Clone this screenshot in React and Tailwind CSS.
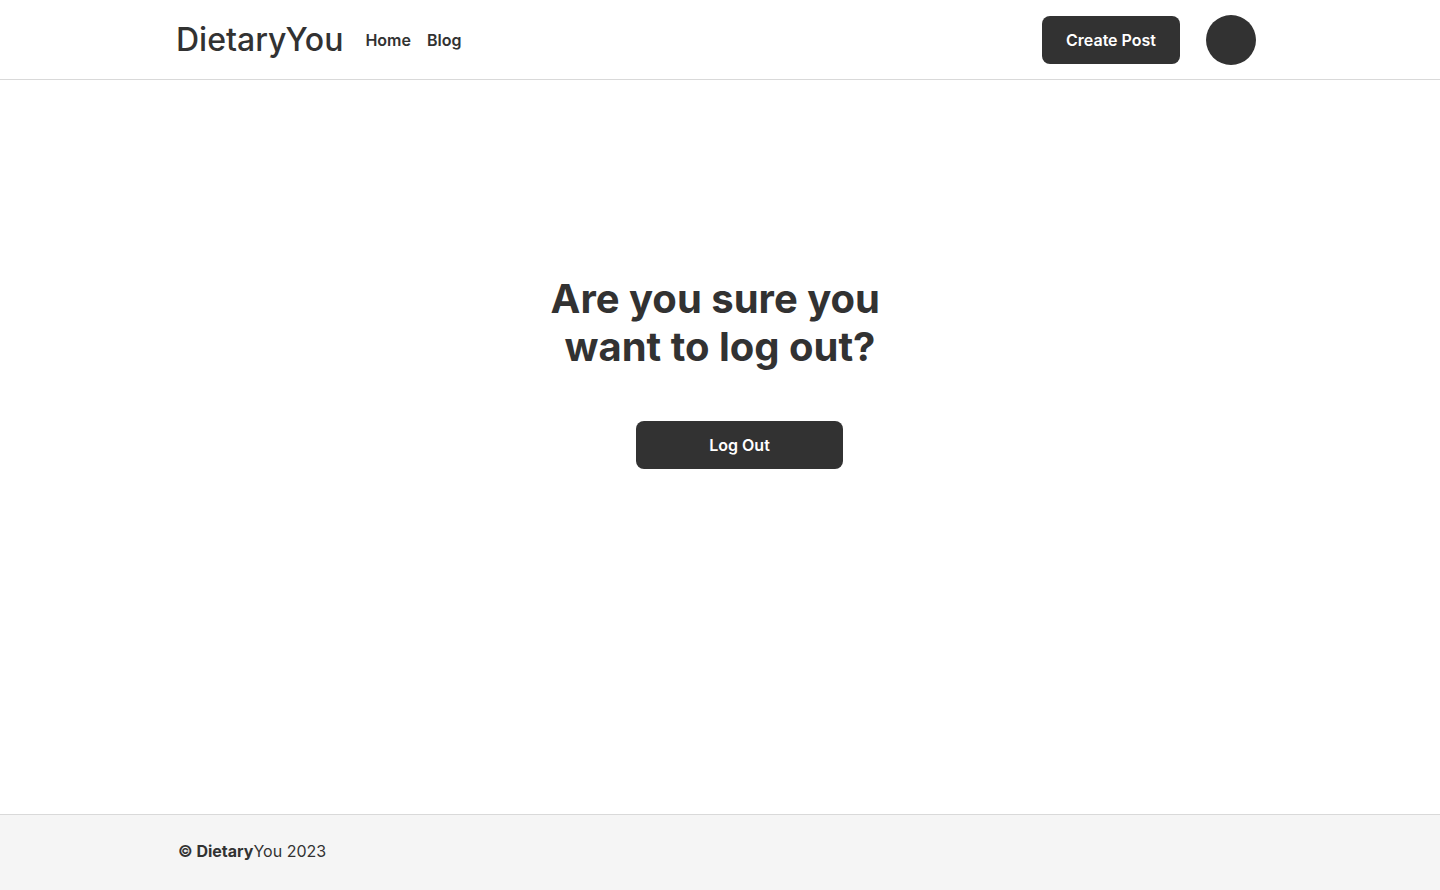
export default function App() {
  return (
    <div className="flex min-h-screen flex-col bg-white font-['Inter',sans-serif] text-[#323232]">
      <header className="border-b border-[#d9d9d9]">
        <div className="mx-auto flex h-[79px] w-full max-w-[1088px] items-center justify-between pr-2">
          <nav aria-label="Main" className="flex items-center">
            <a href="#" className="mr-[22px] text-[32px] leading-10 font-medium">DietaryYou</a>
            <div className="flex gap-4 text-base font-semibold">
              <a href="#home">Home</a>
              <a href="#blog">Blog</a>
            </div>
          </nav>
          <div className="flex items-center gap-[26px]">
            <button type="button" className="h-12 rounded-lg bg-[#323232] px-6 text-base font-semibold text-white">Create Post</button>
            <button type="button" aria-label="Account" className="size-[50px] rounded-full bg-[#323232]" />
          </div>
        </div>
      </header>
      <main className="flex flex-1 flex-col items-center pt-[195px]">
        <h1 className="whitespace-pre-wrap text-center text-[40px] leading-12 font-bold">{"Are you sure you \nwant to log out?"}</h1>
        <button type="button" className="ml-[39px] mt-[50px] h-12 w-[207px] rounded-lg bg-[#323232] text-base font-semibold text-white">Log Out</button>
      </main>
      <footer className="border-t border-[#d9d9d9] bg-[#f5f5f5]">
        <p className="mx-auto w-full max-w-[1084px] pt-6 pb-[27px] text-base">
          <span className="font-bold">© Dietary</span>You 2023
        </p>
      </footer>
    </div>
  );
}
